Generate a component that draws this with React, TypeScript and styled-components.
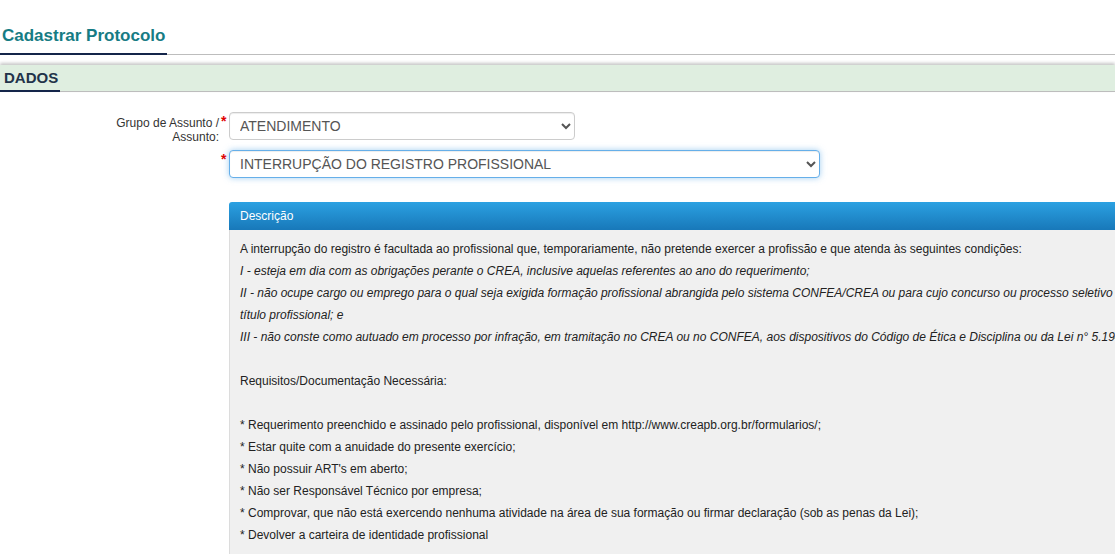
import React from "react";
import styled, { createGlobalStyle } from "styled-components";

const Global = createGlobalStyle`
  html, body { margin: 0; padding: 0; background: #fff; }
  body { font-family: "Liberation Sans", Arial, sans-serif; overflow: hidden; }
  #root { width: 1115px; overflow: hidden; }
`;

const Page = styled.div`
  width: 1115px;
  overflow: hidden;
`;

const TitleBar = styled.div`
  border-bottom: 1px solid #bdbdbd;
  padding-top: 26px;
  display: flex;
`;

const Title = styled.h1`
  margin: 0 0 -1px 0;
  padding: 0 2px 7px 2px;
  font-size: 17px;
  line-height: 20px;
  font-weight: bold;
  color: #167c84;
  border-bottom: 2px solid #14254a;
`;

const SectionBand = styled.div`
  margin-top: 10px;
  height: 26px;
  background: #dfeee0;
  border-bottom: 1px solid #bdbdbd;
  box-shadow: 0 -2px 3px rgba(0, 0, 0, 0.22);
  display: flex;
  align-items: stretch;
`;

const SectionTitle = styled.div`
  padding: 0 2px 0 4px;
  width: 54px;
  font-size: 15px;
  font-weight: bold;
  color: #22334a;
  line-height: 25px;
  border-bottom: 2px solid #14254a;
  margin-bottom: -1px;
`;

const Form = styled.div`
  padding-top: 20px;
  display: flex;
  flex-direction: column;
  gap: 6px;
`;

const Row = styled.div`
  display: flex;
  align-items: flex-start;
`;

const LabelCell = styled.div`
  width: 229px;
  display: flex;
  align-items: flex-start;
`;

const Label = styled.div`
  width: 219px;
  text-align: right;
  font-size: 12px;
  line-height: 14px;
  color: #333;
  padding-top: 4px;
`;

const StarCell = styled.div`
  width: 10px;
  padding-left: 2px;
  box-sizing: border-box;
  color: #e00000;
  font-size: 14px;
  font-weight: bold;
  line-height: 16px;
  padding-top: 1px;
`;

const Select = styled.select<{ $w: number; $focus?: boolean }>`
  width: ${(p) => p.$w}px;
  height: 28px;
  font-family: "Liberation Sans", Arial, sans-serif;
  font-size: 14px;
  color: #555;
  background: #fff;
  border: 1px solid ${(p) => (p.$focus ? "#66afe9" : "#cccccc")};
  border-radius: 4px;
  padding: 0 4px 0 6px;
  box-shadow: ${(p) =>
    p.$focus
      ? "inset 0 1px 1px rgba(0,0,0,.075), 0 0 6px rgba(102,175,233,.6)"
      : "inset 0 1px 1px rgba(0,0,0,.075)"};
  outline: none;
`;

const Panel = styled.div`
  margin: 24px 0 0 229px;
  width: 1000px;
  border-radius: 3px 3px 0 0;
  overflow: hidden;
`;

const PanelHeader = styled.div`
  height: 28px;
  background: linear-gradient(to bottom, #2ba1e2, #1878b9);
  color: #fff;
  font-size: 12px;
  line-height: 28px;
  padding-left: 11px;
`;

const PanelBody = styled.div`
  background: #f0f0f0;
  border-left: 1px solid #dcdcdc;
  padding: 8px 10px 20px 10px;
  font-size: 12px;
  line-height: 22px;
  color: #222;
`;

const Line = styled.div<{ $italic?: boolean }>`
  white-space: nowrap;
  font-style: ${(p) => (p.$italic ? "italic" : "normal")};
  min-height: 22px;
`;

const lines: { t: string; i?: boolean }[] = [
  {
    t: "A interrupção do registro é facultada ao profissional que, temporariamente, não pretende exercer a profissão e que atenda às seguintes condições:",
  },
  {
    t: "I - esteja em dia com as obrigações perante o CREA, inclusive aquelas referentes ao ano do requerimento;",
    i: true,
  },
  {
    t: "II - não ocupe cargo ou emprego para o qual seja exigida formação profissional abrangida pelo sistema CONFEA/CREA ou para cujo concurso ou processo seletivo seja exigido",
    i: true,
  },
  { t: "título profissional; e", i: true },
  {
    t: "III - não conste como autuado em processo por infração, em tramitação no CREA ou no CONFEA, aos dispositivos do Código de Ética e Disciplina ou da Lei n° 5.194/66.",
    i: true,
  },
  { t: "" },
  { t: "Requisitos/Documentação Necessária:" },
  { t: "" },
  {
    t: "* Requerimento preenchido e assinado pelo profissional, disponível em http://www.creapb.org.br/formularios/;",
  },
  { t: "* Estar quite com a anuidade do presente exercício;" },
  { t: "* Não possuir ART's em aberto;" },
  { t: "* Não ser Responsável Técnico por empresa;" },
  {
    t: "* Comprovar, que não está exercendo nenhuma atividade na área de sua formação ou firmar declaração (sob as penas da Lei);",
  },
  { t: "* Devolver a carteira de identidade profissional" },
];

export default function App() {
  return (
    <Page>
      <Global />
      <TitleBar>
        <Title>Cadastrar Protocolo</Title>
      </TitleBar>
      <SectionBand>
        <SectionTitle>DADOS</SectionTitle>
      </SectionBand>
      <Form>
        <Row>
          <LabelCell>
            <Label>
              Grupo de Assunto /
              <br />
              Assunto:
            </Label>
            <StarCell>*</StarCell>
          </LabelCell>
          <Select $w={346} defaultValue="at">
            <option value="at">ATENDIMENTO</option>
          </Select>
        </Row>
        <Row>
          <LabelCell>
            <Label />
            <StarCell>*</StarCell>
          </LabelCell>
          <Select $w={591} $focus defaultValue="ir">
            <option value="ir">INTERRUPÇÃO DO REGISTRO PROFISSIONAL</option>
          </Select>
        </Row>
      </Form>
      <Panel>
        <PanelHeader>Descrição</PanelHeader>
        <PanelBody>
          {lines.map((l, k) => (
            <Line key={k} $italic={l.i}>
              {l.t}
            </Line>
          ))}
        </PanelBody>
      </Panel>
    </Page>
  );
}
